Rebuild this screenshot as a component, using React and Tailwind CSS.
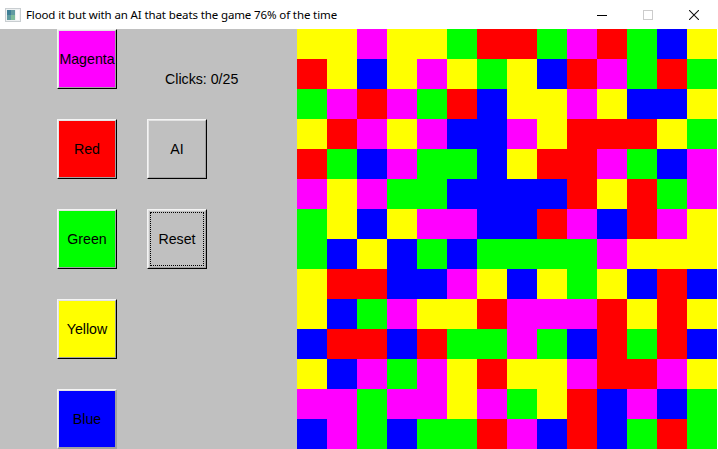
const BOARD = [
  "YYMYYGRRGMRGBY",
  "RYBYMYGYBRMGRG",
  "GMRMGRBYYMYBBY",
  "YRMYMBBMYRRRYG",
  "RGBMGGBYRRMGBM",
  "MYMGGBBBBRYRGM",
  "GYBYMMBBRMBRMY",
  "GBYBGBGGGGMYYY",
  "YRRBBMYBYGYBRB",
  "YBGMYYRMMMRYRY",
  "BRRBRGGMGBRGRB",
  "YBMGMYRYYMRRMY",
  "MMGMMYMGYRBMBG",
  "BMGBGGRMBRBGRG",
];

const CELL = {
  R: "bg-[#ff0000]",
  G: "bg-[#00ff00]",
  B: "bg-[#0000ff]",
  Y: "bg-[#ffff00]",
  M: "bg-[#ff00ff]",
};

function TkButton({ label, face, focused, outerEdge = "border-r-black border-b-black" }) {
  return (
    <button className={`w-[60px] h-[60px] border border-t-[#f4f4f4] border-l-[#f4f4f4] ${outerEdge} ${face}`}>
      <div className="h-full w-full border border-t-[#e3e3e3] border-l-[#e3e3e3] border-r-[#a0a0a0] border-b-[#a0a0a0] flex">
        <div className={`flex-1 flex items-center justify-center pt-[2px] text-[14.2px] text-black whitespace-nowrap ${focused ? "m-px border border-dotted border-black" : ""}`}>
          {label}
        </div>
      </div>
    </button>
  );
}

function AppIcon() {
  return (
    <svg width="16" height="16" viewBox="0 0 16 16">
      <rect x="0.5" y="1.5" width="15" height="13" fill="#eef1f2" stroke="#c9ced1" />
      <rect x="2" y="3" width="8" height="10" fill="#5f9aa0" />
      <rect x="2" y="3" width="4" height="5" fill="#3f7f96" />
      <rect x="6" y="8" width="4" height="5" fill="#7dbb9a" />
      <rect x="11" y="3" width="3" height="10" fill="#fbfbfb" />
    </svg>
  );
}

export default function App() {
  return (
    <div className="w-[718px] h-[449px] overflow-hidden flex flex-col bg-white font-['Liberation_Sans',sans-serif]">
      <div className="h-[29px] shrink-0 flex items-center bg-white pl-[5px] pr-px">
        <AppIcon />
        <span className="ml-[5px] text-[11.5px] tracking-[-0.12px] text-black font-['Noto_Sans',sans-serif]">
          Flood it but with an AI that beats the game 76% of the time
        </span>
        <div className="ml-auto flex h-full">
          <div className="w-[46px] flex items-center justify-center">
            <svg width="10" height="10" viewBox="0 0 10 10"><path d="M0 5.5H10" stroke="#000" /></svg>
          </div>
          <div className="w-[46px] flex items-center justify-center">
            <svg width="10" height="10" viewBox="0 0 10 10"><rect x="0.5" y="0.5" width="9" height="9" fill="none" stroke="#cccccc" /></svg>
          </div>
          <div className="w-[46px] flex items-center justify-center">
            <svg width="10" height="10" viewBox="0 0 10 10"><path d="M0 0L10 10M10 0L0 10" stroke="#111" strokeWidth="1.05" /></svg>
          </div>
        </div>
      </div>

      <div className="flex-1 flex">
        <div className="w-[297px] shrink-0 bg-[#c0c0c0] pl-[57px] grid grid-cols-[60px_60px] auto-rows-[60px] gap-[30px]">
          <TkButton label="Magenta" face="bg-[#ff00ff]" />
          <div className="pt-[42px] pl-[18px] text-[14.2px] leading-[17px] text-black whitespace-nowrap">Clicks: 0/25</div>
          <TkButton label="Red" face="bg-[#ff0000]" />
          <TkButton label="AI" face="bg-[#c0c0c0]" />
          <TkButton label="Green" face="bg-[#00ff00]" />
          <TkButton label="Reset" face="bg-[#c0c0c0]" focused />
          <TkButton label="Yellow" face="bg-[#ffff00]" />
          <div />
          <TkButton label="Blue" face="bg-[#0000ff]" outerEdge="border-r-[#a0a0a0] border-b-[#a0a0a0]" />
        </div>

        <div className="w-[420px] grid grid-cols-[repeat(14,30px)] auto-rows-[30px]">
          {BOARD.flatMap((row, y) =>
            row.split("").map((c, x) => <div key={`${x}-${y}`} className={CELL[c]} />)
          )}
        </div>
      </div>
    </div>
  );
}
